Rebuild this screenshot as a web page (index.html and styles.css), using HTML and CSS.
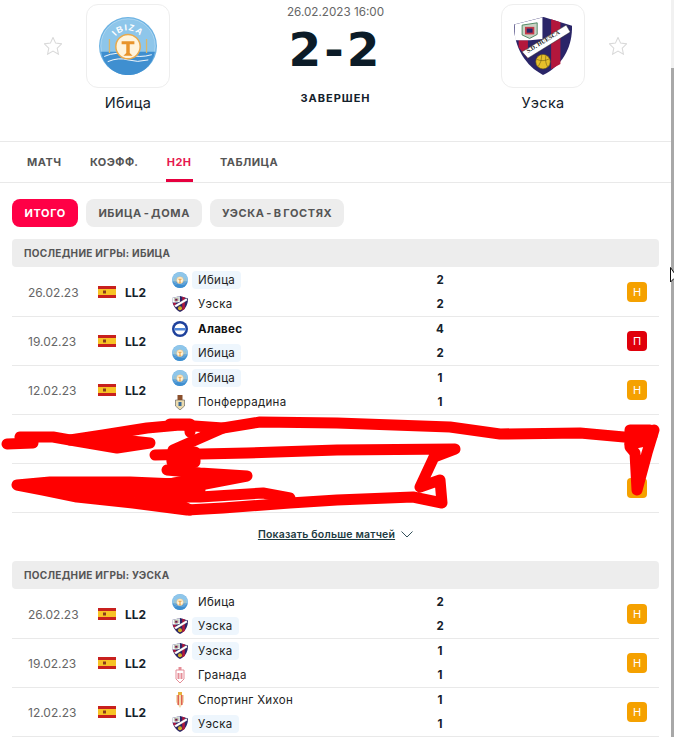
FILE: index.html
```html
<!DOCTYPE html>
<html lang="ru">
<head>
    <meta charset="UTF-8">
    <meta name="viewport" content="width=device-width, initial-scale=1.0">
    <title>Ибица - Уэска</title>
    <link rel="stylesheet" href="styles.css">
</head>
<body>
    <svg class="defs" width="0" height="0">
        <symbol id="star" viewBox="2 2 20 20">
            <path d="M12 2.500l2.900 6.300 6.800.8-5 4.700 1.300 6.800-6-3.400-6 3.400 1.300-6.800-5-4.700 6.800-.8z" fill="#fff" stroke="#d9d9d9" stroke-width="1.200"/>
        </symbol>
        <symbol id="ibiza" viewBox="0 0 100 100">
            <circle cx="50" cy="50" r="50" fill="#6db3e3"/>
            <circle cx="50" cy="50" r="47" fill="#8ec6ea" stroke="#cfe6f6" stroke-width="1"/>
            <path d="M3.500 60h93a47 47 0 0 1-93 0z" fill="#3f8fd0"/>
            <path d="M9 68q21-9 41-3t41 0M15 77q19-8 35-3t35 0" fill="none" stroke="#fff" stroke-width="1.600"/>
            <path d="M18 38v24M82 38v24" stroke="#d9b66a" stroke-width="2.200"/>
            <circle cx="50" cy="51" r="21" fill="#fff4dc" stroke="#e9a94a" stroke-width="2.500"/>
            <path d="M39 42h22v5h-8v15l5 5H42l5-5V47h-8z" fill="#e8942b"/>
        </symbol>
        <symbol id="huesca" viewBox="0 0 100 100">
            <path d="M0 13L51 0l49 15c1 35-15 68-50 85C18 84-1 48 0 13z" fill="#2a2568"/>
            <path d="M64 4l16 5v72l-16 9zM8 40h16v32L8 52z" fill="#b3173c"/>
            <path d="M1 13L49 1V38L28 40H2z" fill="#fff"/>
            <path d="M14 14l26-4v20l-13 7-13-6z" fill="#c9d3c4" stroke="#3f7d55" stroke-width="1.500"/>
            <path d="M19 17h16v13H19z" fill="#c33a4a"/>
            <path d="M22 20h10v7H22z" fill="#2a2568"/>
            <path d="M14 60L90 14l7 12L24 71z" fill="#fff" stroke="#222" stroke-width=".8"/>
            <circle cx="50" cy="77" r="12.500" fill="#e6bf2b" stroke="#6d5a12" stroke-width="1"/>
            <path d="M39 73q11 5 22-1M42 85q6-8 6-20M58 86q-5-8-3-20" fill="none" stroke="#6d5a12" stroke-width="1"/>
        </symbol>
        <symbol id="alaves" viewBox="0 0 16 16">
            <circle cx="8" cy="8" r="8" fill="#1e419c"/>
            <circle cx="8" cy="8" r="5.500" fill="#fff"/>
            <path d="M2.500 7h11v2.500h-11z" fill="#4f86d8"/>
        </symbol>
        <symbol id="ponferradina" viewBox="0 0 16 16">
            <path d="M3.500 6h9v6l-4.500 4-4.500-4z" fill="#ecdcae" stroke="#555" stroke-width=".6"/>
            <path d="M5.500 1h5v5h-5z" fill="#8a4f2c"/>
            <path d="M6.500 8h3v4h-3z" fill="#3a6a99"/>
        </symbol>
        <symbol id="granada" viewBox="0 0 16 16">
            <path d="M4 3h8v9l-4 4-4-4z" fill="#fff" stroke="#e58d97" stroke-width="1"/>
            <path d="M6.500 0h3v3h-3zM5.500 6h2v6h-2zM8.500 6h2v6h-2z" fill="#e58d97"/>
        </symbol>
        <symbol id="sporting" viewBox="0 0 16 16">
            <path d="M6 0h4v3H6z" fill="#e8b23c"/>
            <path d="M4 3h8v7l-4 6-4-6z" fill="#f3d9b0"/>
            <path d="M5.500 3h1.500v10H5.500zM9 3h1.500v10H9z" fill="#e0604f"/>
        </symbol>
        <symbol id="spain" viewBox="0 0 18 12">
            <path d="M0 0h18v12H0z" fill="#c8201e"/>
            <path d="M0 3h18v6H0z" fill="#f7c325"/>
            <path d="M5 4.500h3v3H5z" fill="#8a3b1c"/>
        </symbol>
    </svg>

    <main class="page">
        <header class="match-head">
            <svg class="star"><use href="#star"/></svg>
            <div class="team">
                <div class="team-logo">
                    <svg class="logo-big" viewBox="0 0 100 100">
                        <use href="#ibiza"/>
                        <path id="ibiza-arc" d="M23 50a27 27 0 0 1 54 0" fill="none"/>
                        <text class="ibiza-text"><textPath href="#ibiza-arc" startOffset="50%" text-anchor="middle">IBIZA</textPath></text>
                    </svg>
                </div>
                <span class="team-title">Ибица</span>
            </div>
            <div class="score-box">
                <span class="match-date">26.02.2023 16:00</span>
                <span class="score">2-2</span>
                <span class="match-status">Завершен</span>
            </div>
            <div class="team">
                <div class="team-logo">
                    <svg class="logo-big" viewBox="0 0 100 100">
                        <use href="#huesca"/>
                        <text class="huesca-text" transform="translate(24 62) rotate(-31)">S.D. HUESCA</text>
                    </svg>
                </div>
                <span class="team-title">Уэска</span>
            </div>
            <svg class="star"><use href="#star"/></svg>
        </header>

        <nav class="tabs">
            <a class="tab">Матч</a>
            <a class="tab">Коэфф.</a>
            <a class="tab active">H2H</a>
            <a class="tab">Таблица</a>
        </nav>

        <div class="filters">
            <a class="pill active">Итого</a>
            <a class="pill">Ибица - дома</a>
            <a class="pill">Уэска - в гостях</a>
        </div>

        <section class="games">
            <h2 class="games-title">Последние игры: Ибица</h2>

            <div class="game">
                <span class="game-date">26.02.23</span>
                <svg class="flag"><use href="#spain"/></svg>
                <span class="league">LL2</span>
                <div class="teams">
                    <div class="line"><svg class="logo"><use href="#ibiza"/></svg><span class="name own">Ибица</span><span class="goals">2</span></div>
                    <div class="line"><svg class="logo"><use href="#huesca"/></svg><span class="name">Уэска</span><span class="goals">2</span></div>
                </div>
                <span class="result draw">Н</span>
            </div>
            <div class="game">
                <span class="game-date">19.02.23</span>
                <svg class="flag"><use href="#spain"/></svg>
                <span class="league">LL2</span>
                <div class="teams">
                    <div class="line"><svg class="logo"><use href="#alaves"/></svg><span class="name winner">Алавес</span><span class="goals">4</span></div>
                    <div class="line"><svg class="logo"><use href="#ibiza"/></svg><span class="name own">Ибица</span><span class="goals">2</span></div>
                </div>
                <span class="result loss">П</span>
            </div>
            <div class="game">
                <span class="game-date">12.02.23</span>
                <svg class="flag"><use href="#spain"/></svg>
                <span class="league">LL2</span>
                <div class="teams">
                    <div class="line"><svg class="logo"><use href="#ibiza"/></svg><span class="name own">Ибица</span><span class="goals">1</span></div>
                    <div class="line"><svg class="logo"><use href="#ponferradina"/></svg><span class="name">Понферрадина</span><span class="goals">1</span></div>
                </div>
                <span class="result draw">Н</span>
            </div>
            <div class="game"></div>
            <div class="game">
                <span class="result draw">Н</span>
            </div>

            <a class="more">Показать больше матчей
                <svg class="chevron" viewBox="0 0 12 7"><path d="M.5.5L6 6l5.500-5.500" fill="none" stroke="#33505a" stroke-width="1"/></svg>
            </a>
        </section>

        <section class="games">
            <h2 class="games-title">Последние игры: Уэска</h2>

            <div class="game">
                <span class="game-date">26.02.23</span>
                <svg class="flag"><use href="#spain"/></svg>
                <span class="league">LL2</span>
                <div class="teams">
                    <div class="line"><svg class="logo"><use href="#ibiza"/></svg><span class="name">Ибица</span><span class="goals">2</span></div>
                    <div class="line"><svg class="logo"><use href="#huesca"/></svg><span class="name own">Уэска</span><span class="goals">2</span></div>
                </div>
                <span class="result draw">Н</span>
            </div>
            <div class="game">
                <span class="game-date">19.02.23</span>
                <svg class="flag"><use href="#spain"/></svg>
                <span class="league">LL2</span>
                <div class="teams">
                    <div class="line"><svg class="logo"><use href="#huesca"/></svg><span class="name own">Уэска</span><span class="goals">1</span></div>
                    <div class="line"><svg class="logo"><use href="#granada"/></svg><span class="name">Гранада</span><span class="goals">1</span></div>
                </div>
                <span class="result draw">Н</span>
            </div>
            <div class="game">
                <span class="game-date">12.02.23</span>
                <svg class="flag"><use href="#spain"/></svg>
                <span class="league">LL2</span>
                <div class="teams">
                    <div class="line"><svg class="logo"><use href="#sporting"/></svg><span class="name">Спортинг Хихон</span><span class="goals">1</span></div>
                    <div class="line"><svg class="logo"><use href="#huesca"/></svg><span class="name own">Уэска</span><span class="goals">1</span></div>
                </div>
                <span class="result draw">Н</span>
            </div>
        </section>
    </main>

    <div class="scrollbar"><div class="scroll-thumb"></div></div>

    <!-- red marker scribbled over the screenshot -->
    <svg class="scribble" viewBox="0 0 674 737">
        <g fill="none" stroke="#f00" stroke-width="11" stroke-linecap="round" stroke-linejoin="round">
            <path d="M7 444L33 443 20 437H53L70 440 103 435 147 428 180 425 223 428 260 422 337 423 450 427 500 434 580 433 624 437 654 430 647 453 637 490 635 453 630 447V430H650"/>
            <path d="M70 440L117 448 150 443 103 438M223 428L173 450"/>
            <path d="M155 455L247 453 337 450 455 449 434 457 420 487 440 480 442 503 413 497 337 500 290 503 223 508 187 510 133 503 77 497 43 490 17 485 50 482 130 482 200 485 247 476 200 473 167 470"/>
            <path d="M172 460L195 456M140 497H200L263 493 290 498M60 487L180 495M90 490L190 482M170 424H190V432M632 436H652M630 444L650 440"/>
            <path d="M120 493L200 490M175 452H195V462H172M165 485L200 478M170 500L190 510"/>
        </g>
    </svg>

    <svg class="cursor" viewBox="0 0 8 18"><path d="M.5.5V15L4 11.500H8z" fill="#fff" stroke="#111" stroke-width="1"/></svg>
</body>
</html>
```

FILE: styles.css
```css
html, body {
    margin: 0;
    padding: 0;
    height: 737px;
    overflow: hidden;
}
body {
    position: relative;
    display: flex;
    background: #fff;
    color: #14212b;
    font-family: Inter, "Noto Sans", sans-serif;
}
.defs {
    position: absolute;
}
.page {
    width: 671px;
    flex-shrink: 0;
}
.scrollbar {
    width: 3px;
    height: 737px;
    background: #f1f1f1;
    padding-top: 68px;
    box-sizing: border-box;
}
.scroll-thumb {
    height: 100%;
    background: #a8a8a8;
}

/* match header */
.match-head {
    display: flex;
    align-items: flex-start;
    height: 137px;
    padding: 4px 43px 0;
    border-bottom: 1px solid #e9e9e9;
}
.star {
    width: 18px;
    height: 18px;
    margin: 33px 1px 0;
    flex-shrink: 0;
}
.team {
    display: flex;
    flex-direction: column;
    align-items: center;
    width: 84px;
    margin: 0 23px;
}
.team-logo {
    display: flex;
    align-items: center;
    justify-content: center;
    width: 82px;
    height: 82px;
    border: 1px solid #eee;
    border-radius: 12px;
}
.logo-big {
    width: 58px;
    height: 58px;
}
.team-title {
    margin-top: 6px;
    font-size: 14.5px;
    line-height: 17px;
    letter-spacing: .3px;
}
.ibiza-text {
    fill: #fff;
    font-family: "Liberation Sans", sans-serif;
    font-size: 15px;
    font-weight: 700;
    letter-spacing: 2px;
}
.huesca-text {
    fill: #222;
    font-family: "Liberation Serif", serif;
    font-size: 10.5px;
    font-weight: 700;
}
.score-box {
    flex: 1;
    display: flex;
    flex-direction: column;
    align-items: center;
}
.match-date {
    margin-top: 1px;
    font-size: 11.7px;
    line-height: 15px;
    color: #666;
}
.score {
    margin-top: 2px;
    font-family: "DejaVu Sans", sans-serif;
    font-size: 47px;
    font-weight: 700;
    line-height: 56px;
    letter-spacing: 3px;
    color: #0c1c28;
}
.match-status {
    margin-top: 13px;
    font-size: 11px;
    font-weight: 700;
    line-height: 14px;
    letter-spacing: 1px;
    text-transform: uppercase;
}

/* tabs */
.tabs {
    display: flex;
    gap: 28.5px;
    height: 40px;
    padding-left: 27px;
    border-bottom: 1px solid #e9e9e9;
}
.tab {
    display: flex;
    align-items: center;
    height: 40px;
    box-sizing: border-box;
    font-size: 11px;
    font-weight: 700;
    letter-spacing: .45px;
    text-transform: uppercase;
    color: #555;
}
.tab.active {
    color: #e6174f;
    border-bottom: 3px solid #e6003f;
    padding: 3px 1px 0;
    margin: 0 -1px;
}

/* filter pills */
.filters {
    display: flex;
    gap: 8px;
    padding: 16px 12px 12px;
}
.pill {
    height: 28px;
    padding: 0 12px;
    border-radius: 8px;
    background: #ededed;
    font-size: 11px;
    font-weight: 700;
    line-height: 28px;
    letter-spacing: .6px;
    word-spacing: -1.500px;
    text-transform: uppercase;
    color: #555;
}
.pill.active {
    padding: 0 12.5px;
    background: #ff0046;
    color: #fff;
}

/* last games tables */
.games {
    margin: 0 12px;
}
.games-title {
    height: 28px;
    margin: 0 0 1px;
    padding-left: 12px;
    border-radius: 4px;
    background: #ededed;
    font-size: 10px;
    font-weight: 700;
    line-height: 28px;
    letter-spacing: .3px;
    text-transform: uppercase;
    color: #555;
}
.game {
    display: flex;
    align-items: center;
    height: 48px;
    padding: 0 12px 0 16px;
    border-bottom: 1px solid #e9e9e9;
}
.game-date {
    width: 70px;
    font-size: 12px;
    color: #666;
}
.flag {
    width: 18px;
    height: 12px;
    margin-right: 9px;
}
.league {
    width: 47px;
    font-size: 12px;
    font-weight: 700;
}
.teams {
    width: 288px;
}
.line {
    display: flex;
    align-items: center;
    height: 24px;
}
.logo {
    width: 16px;
    height: 16px;
    margin-right: 4px;
    flex-shrink: 0;
}
.name {
    padding: 0 6px;
    font-size: 11.5px;
    line-height: 18px;
    letter-spacing: .3px;
    color: #222;
}
.name.own {
    background: #eef6fd;
    border-radius: 4px;
}
.name.winner {
    font-weight: 700;
    color: #111;
}
.goals {
    width: 40px;
    margin-left: auto;
    text-align: center;
    font-size: 11.5px;
    font-weight: 700;
}
.result {
    width: 20px;
    height: 20px;
    margin-left: auto;
    border-radius: 4px;
    text-align: center;
    font-size: 11px;
    line-height: 20px;
    color: #fff;
}
.result.draw {
    background: #f5a100;
}
.result.loss {
    background: #e0000b;
}
.more {
    display: flex;
    align-items: center;
    justify-content: center;
    gap: 6px;
    height: 42px;
    padding-bottom: 6px;
    font-size: 10.5px;
    font-weight: 600;
    letter-spacing: .2px;
    color: #1d3b42;
    text-decoration: underline;
}
.chevron {
    width: 12px;
    height: 7px;
}

/* things drawn over the page */
.scribble {
    position: absolute;
    left: 0;
    top: 0;
    width: 674px;
    height: 737px;
    pointer-events: none;
}
.cursor {
    position: absolute;
    left: 670px;
    top: 267px;
    width: 8px;
    height: 18px;
}
```
